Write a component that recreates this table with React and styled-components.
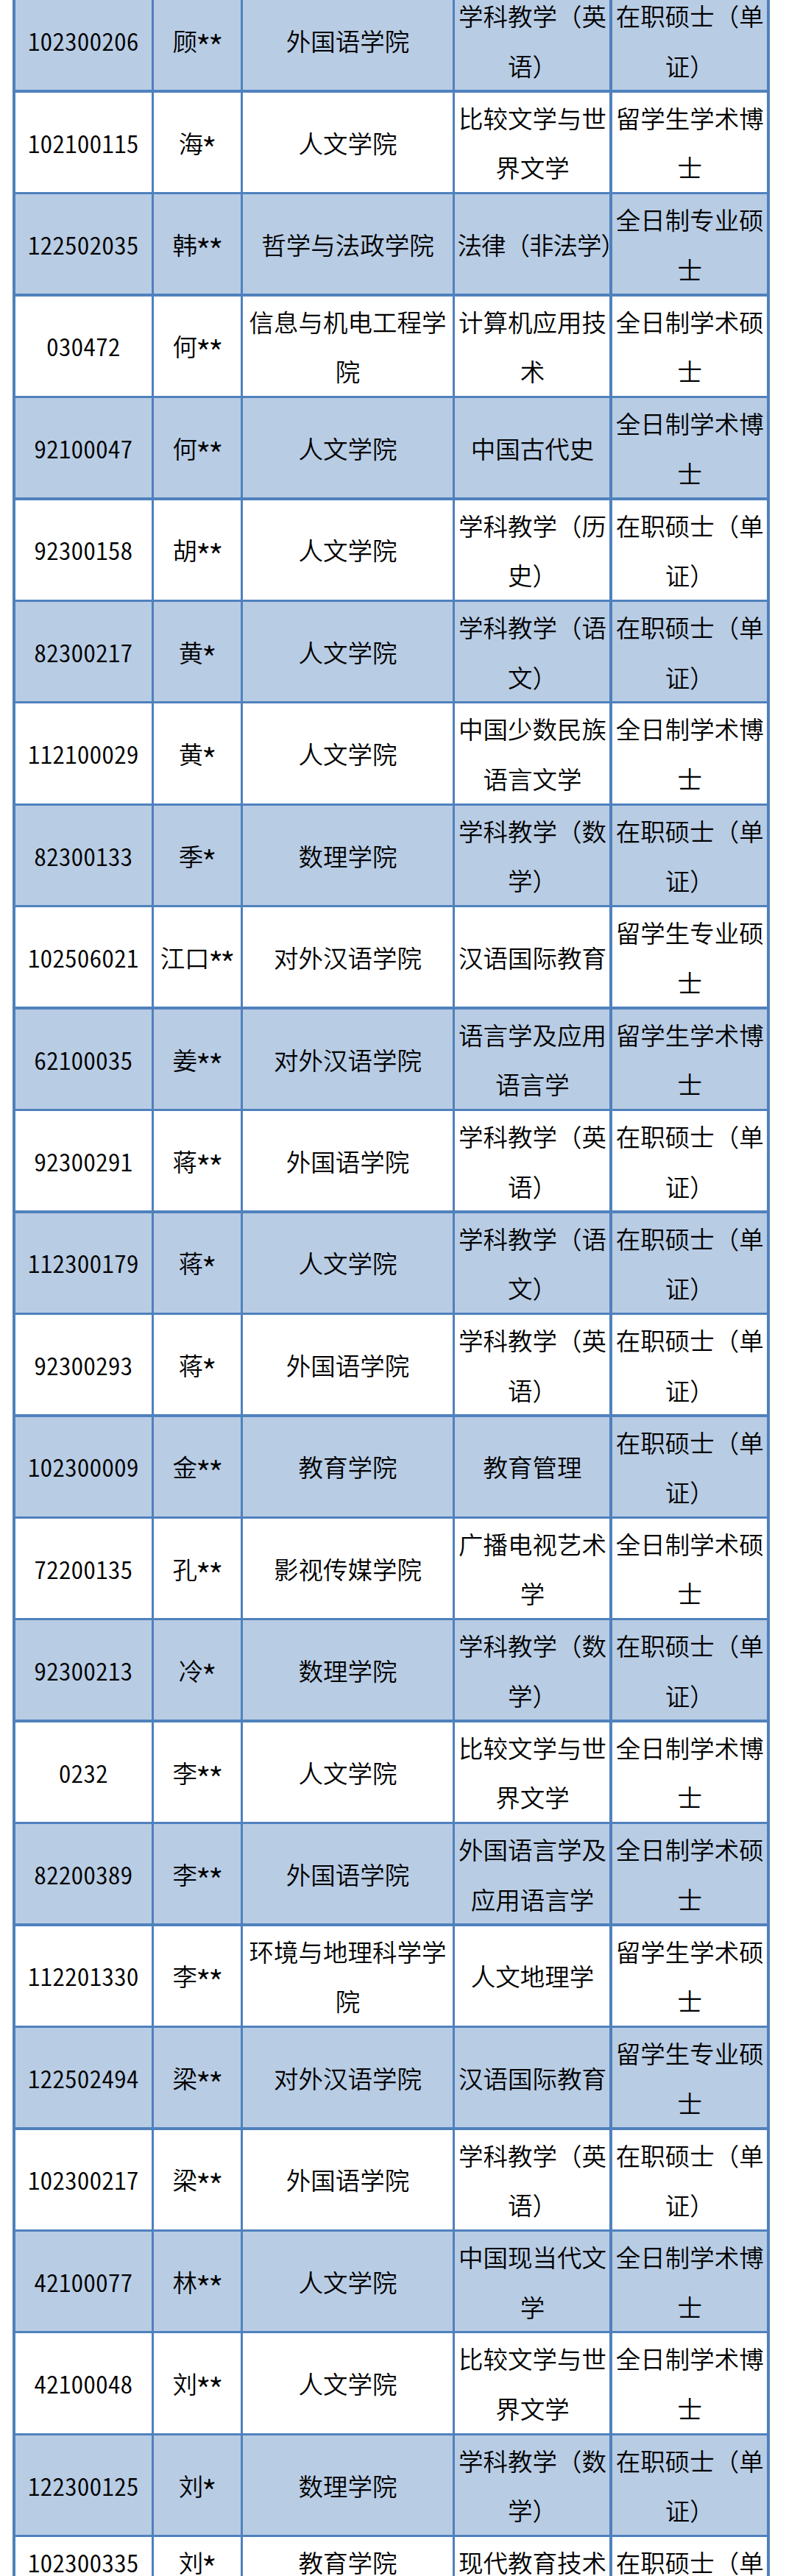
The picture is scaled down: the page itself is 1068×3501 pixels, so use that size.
import React from "react";
import styled, { createGlobalStyle } from "styled-components";

const GlobalStyle = createGlobalStyle`
  html, body {
    margin: 0;
    padding: 0;
    background: #ffffff;
  }
  body {
    font-family: "Noto Sans CJK SC", "Noto Sans", sans-serif;
  }
`;

const Page = styled.div`
  width: 1068px;
  height: 3501px;
  overflow: hidden;
  background: #ffffff;
`;

const Sheet = styled.div`
  display: grid;
  grid-template-columns: 185px 117.6px 285px 210px 210.6px;
  grid-auto-rows: 135.06px;
  gap: 3.4px;
  padding: 3.4px;
  background: #4f81bd;
  width: max-content;
  margin: -16px 0 0 17.3px;
`;

const Cell = styled.div`
  background: ${(p) => (p.$shaded ? "#b8cce4" : "#ffffff")};
  display: flex;
  align-items: ${(p) => (p.$top ? "flex-start" : "center")};
  justify-content: ${(p) => (p.$hang ? "flex-start" : "center")};
  padding: ${(p) => (p.$hang ? "0 0 0 3px" : "0")};
  text-align: center;
  white-space: ${(p) => (p.$hang ? "nowrap" : "normal")};
  letter-spacing: ${(p) => (p.$hang ? "-1px" : "0")};
  font-size: 33.5px;
  font-weight: 350;
  line-height: 67.5px;
  color: #000000;
  font-feature-settings: ${(p) => (p.$latin ? '"hwid"' : "normal")};
  min-width: 0;
`;

const Star = styled.span`
  display: inline-block;
  transform: translateY(8px) scale(1.35);
  transform-origin: center;
`;

const rows = [
  ["102300206", "顾**", "外国语学院", "学科教学（英语）", "在职硕士（单证）"],
  ["102100115", "海*", "人文学院", "比较文学与世界文学", "留学生学术博士"],
  ["122502035", "韩**", "哲学与法政学院", "法律（非法学）", "全日制专业硕士"],
  ["030472", "何**", "信息与机电工程学院", "计算机应用技术", "全日制学术硕士"],
  ["92100047", "何**", "人文学院", "中国古代史", "全日制学术博士"],
  ["92300158", "胡**", "人文学院", "学科教学（历史）", "在职硕士（单证）"],
  ["82300217", "黄*", "人文学院", "学科教学（语文）", "在职硕士（单证）"],
  ["112100029", "黄*", "人文学院", "中国少数民族语言文学", "全日制学术博士"],
  ["82300133", "季*", "数理学院", "学科教学（数学）", "在职硕士（单证）"],
  ["102506021", "江口**", "对外汉语学院", "汉语国际教育", "留学生专业硕士"],
  ["62100035", "姜**", "对外汉语学院", "语言学及应用语言学", "留学生学术博士"],
  ["92300291", "蒋**", "外国语学院", "学科教学（英语）", "在职硕士（单证）"],
  ["112300179", "蒋*", "人文学院", "学科教学（语文）", "在职硕士（单证）"],
  ["92300293", "蒋*", "外国语学院", "学科教学（英语）", "在职硕士（单证）"],
  ["102300009", "金**", "教育学院", "教育管理", "在职硕士（单证）"],
  ["72200135", "孔**", "影视传媒学院", "广播电视艺术学", "全日制学术硕士"],
  ["92300213", "冷*", "数理学院", "学科教学（数学）", "在职硕士（单证）"],
  ["0232", "李**", "人文学院", "比较文学与世界文学", "全日制学术博士"],
  ["82200389", "李**", "外国语学院", "外国语言学及应用语言学", "全日制学术硕士"],
  ["112201330", "李**", "环境与地理科学学院", "人文地理学", "留学生学术硕士"],
  ["122502494", "梁**", "对外汉语学院", "汉语国际教育", "留学生专业硕士"],
  ["102300217", "梁**", "外国语学院", "学科教学（英语）", "在职硕士（单证）"],
  ["42100077", "林**", "人文学院", "中国现当代文学", "全日制学术博士"],
  ["42100048", "刘**", "人文学院", "比较文学与世界文学", "全日制学术博士"],
  ["122300125", "刘*", "数理学院", "学科教学（数学）", "在职硕士（单证）"],
  ["102300335", "刘*", "教育学院", "现代教育技术", "在职硕士（单证）"],
];

function renderName(name) {
  const base = name.replace(/\*+$/, "");
  const stars = name.length - base.length;
  return (
    <>
      {base}
      {Array.from({ length: stars }, (_, k) => (
        <Star key={k}>*</Star>
      ))}
    </>
  );
}

export default function App() {
  const last = rows.length - 1;
  return (
    <>
      <GlobalStyle />
      <Page>
        <Sheet>
          {rows.map((r, i) =>
            r.map((text, j) => (
              <Cell
                key={`${i}-${j}`}
                $shaded={i % 2 === 0}
                $latin={j < 2}
                $top={i === last}
                $hang={text === "法律（非法学）"}
              >
                {j === 1 ? renderName(text) : text}
              </Cell>
            ))
          )}
        </Sheet>
      </Page>
    </>
  );
}
